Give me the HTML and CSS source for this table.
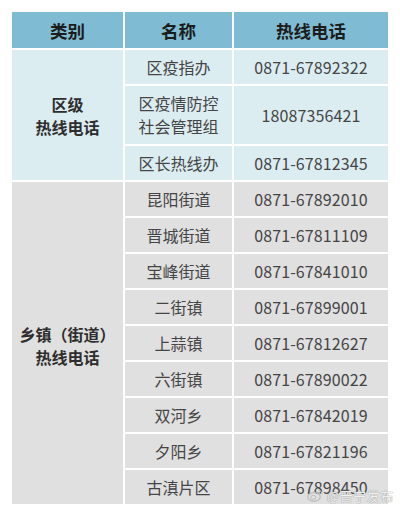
FILE: index.html
```html
<!DOCTYPE html>
<html lang="zh-CN">
<head>
<meta charset="utf-8">
<link rel="stylesheet" href="styles.css">
</head>
<body>
<div class="page">
  <div class="grid">
    <div class="cell head">类别</div>
    <div class="cell head">名称</div>
    <div class="cell head">热线电话</div>

    <div class="cell cat blue span3">区级<br>热线电话</div>
    <div class="cell blue r34">区疫指办</div>
    <div class="cell blue num">0871-67892322</div>
    <div class="cell blue r58">区疫情防控<br>社会管理组</div>
    <div class="cell blue num">18087356421</div>
    <div class="cell blue r34">区长热线办</div>
    <div class="cell blue num">0871-67812345</div>

    <div class="cell cat gray span9">乡镇（街道）<br>热线电话</div>
    <div class="cell gray">昆阳街道</div>
    <div class="cell gray num">0871-67892010</div>
    <div class="cell gray">晋城街道</div>
    <div class="cell gray num">0871-67811109</div>
    <div class="cell gray">宝峰街道</div>
    <div class="cell gray num">0871-67841010</div>
    <div class="cell gray">二街镇</div>
    <div class="cell gray num">0871-67899001</div>
    <div class="cell gray">上蒜镇</div>
    <div class="cell gray num">0871-67812627</div>
    <div class="cell gray">六街镇</div>
    <div class="cell gray num">0871-67890022</div>
    <div class="cell gray">双河乡</div>
    <div class="cell gray num">0871-67842019</div>
    <div class="cell gray">夕阳乡</div>
    <div class="cell gray num">0871-67821196</div>
    <div class="cell gray">古滇片区</div>
    <div class="cell gray num">0871-67898450</div>
  </div>
  <div class="watermark">
    <svg class="wb" width="16" height="13" viewBox="0 0 16 13">
      <ellipse cx="7" cy="8" rx="6.3" ry="4.3" fill="none" stroke="#bdbdbd" stroke-width="1.2"/>
      <ellipse cx="6.3" cy="8.4" rx="2.6" ry="2" fill="none" stroke="#bdbdbd" stroke-width="1"/>
      <path d="M11 1.5 A4 4 0 0 1 15 5.5" fill="none" stroke="#bdbdbd" stroke-width="1.1"/>
      <path d="M10.8 3.6 A2 2 0 0 1 12.9 5.6" fill="none" stroke="#bdbdbd" stroke-width="1"/>
    </svg>
    <span class="wm-text">@晋宁发布</span>
  </div>
</div>
</body>
</html>
```

FILE: styles.css
```css
html, body {
  margin: 0;
  padding: 0;
  background: #ffffff;
}

.page {
  position: relative;
  width: 400px;
  height: 507px;
  padding: 12px 12px 0 12px;
  box-sizing: border-box;
  font-family: "Noto Sans CJK SC", "Noto Sans", sans-serif;
}

.grid {
  display: grid;
  grid-template-columns: 111px 107px 154px;
  grid-template-rows: 36px 34px 58px 34px repeat(9, 34px);
  gap: 2px;
}

.cell {
  display: flex;
  align-items: center;
  justify-content: center;
  text-align: center;
  font-size: 16px;
  line-height: 23px;
  color: #454545;
}

.head {
  background: #7fbcd3;
  color: #1c1c1c;
  font-weight: 700;
  font-size: 17.5px;
}

.blue {
  background: #dcedf2;
}

.gray {
  background: #e0e0e0;
}

.num {
  letter-spacing: 0.1px;
}

.cat {
  font-weight: 700;
  color: #2e2e2e;
}

.span3 {
  grid-row: span 3;
  padding-top: 2px;
}

.span9 {
  grid-row: span 9;
  padding-top: 6px;
}

.watermark {
  position: absolute;
  left: 307px;
  top: 486px;
  display: flex;
  align-items: center;
  gap: 4px;
}

.wm-text {
  font-size: 13px;
  color: rgba(255, 255, 255, 0.85);
  text-shadow: 0 0 1px #9a9a9a, 0 0 1px #9a9a9a;
  letter-spacing: 0.5px;
}
```
